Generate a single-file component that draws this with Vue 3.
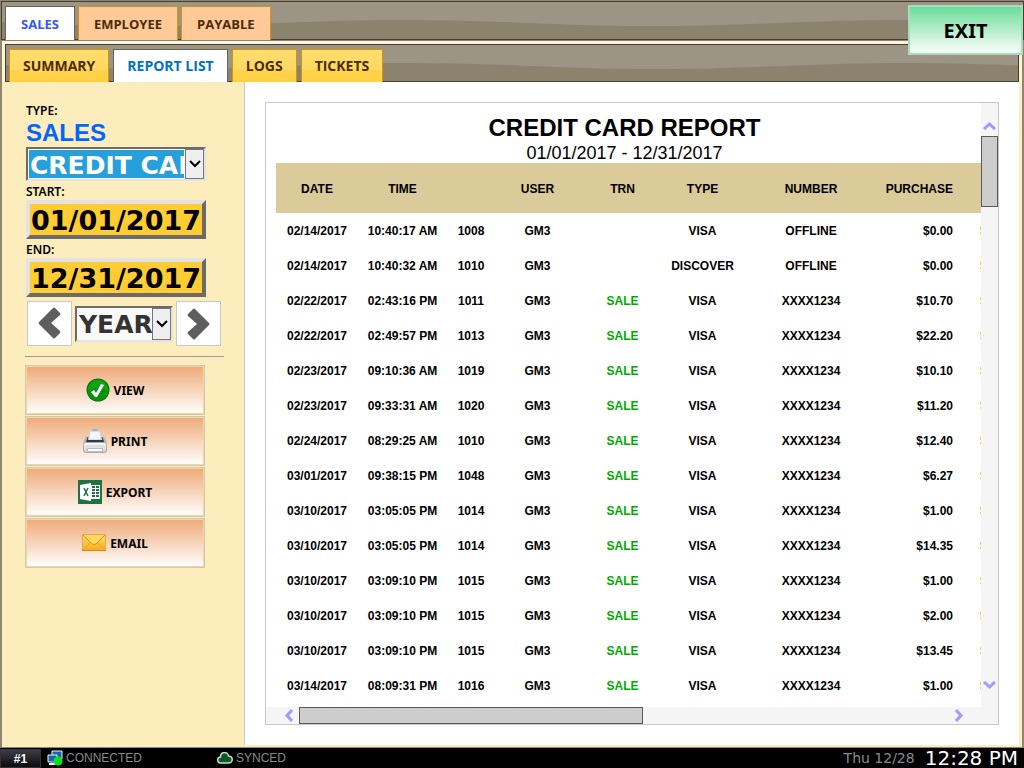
<script setup>
import { ref } from 'vue'

const mainTabs = ['SALES', 'EMPLOYEE', 'PAYABLE']
const subTabs = ['SUMMARY', 'REPORT LIST', 'LOGS', 'TICKETS']
const mainTab = ref('SALES')
const subTab = ref('REPORT LIST')

const report = ref('CREDIT CARD')
const start = ref('01/01/2017')
const end = ref('12/31/2017')
const period = ref('YEAR')

const rows = [
  ['02/14/2017', '10:40:17 AM', '1008', 'GM3', '', 'VISA', 'OFFLINE', '$0.00'],
  ['02/14/2017', '10:40:32 AM', '1010', 'GM3', '', 'DISCOVER', 'OFFLINE', '$0.00'],
  ['02/22/2017', '02:43:16 PM', '1011', 'GM3', 'SALE', 'VISA', 'XXXX1234', '$10.70'],
  ['02/22/2017', '02:49:57 PM', '1013', 'GM3', 'SALE', 'VISA', 'XXXX1234', '$22.20'],
  ['02/23/2017', '09:10:36 AM', '1019', 'GM3', 'SALE', 'VISA', 'XXXX1234', '$10.10'],
  ['02/23/2017', '09:33:31 AM', '1020', 'GM3', 'SALE', 'VISA', 'XXXX1234', '$11.20'],
  ['02/24/2017', '08:29:25 AM', '1010', 'GM3', 'SALE', 'VISA', 'XXXX1234', '$12.40'],
  ['03/01/2017', '09:38:15 PM', '1048', 'GM3', 'SALE', 'VISA', 'XXXX1234', '$6.27'],
  ['03/10/2017', '03:05:05 PM', '1014', 'GM3', 'SALE', 'VISA', 'XXXX1234', '$1.00'],
  ['03/10/2017', '03:05:05 PM', '1014', 'GM3', 'SALE', 'VISA', 'XXXX1234', '$14.35'],
  ['03/10/2017', '03:09:10 PM', '1015', 'GM3', 'SALE', 'VISA', 'XXXX1234', '$1.00'],
  ['03/10/2017', '03:09:10 PM', '1015', 'GM3', 'SALE', 'VISA', 'XXXX1234', '$2.00'],
  ['03/10/2017', '03:09:10 PM', '1015', 'GM3', 'SALE', 'VISA', 'XXXX1234', '$13.45'],
  ['03/14/2017', '08:09:31 PM', '1016', 'GM3', 'SALE', 'VISA', 'XXXX1234', '$1.00']
]
</script>

<template>
  <div class="page">
    <nav class="bar main-bar">
      <button
        v-for="tab in mainTabs"
        :key="tab"
        class="tab"
        :class="{ active: tab === mainTab }"
        @click="mainTab = tab"
      >{{ tab }}</button>
    </nav>
    <button class="exit">EXIT</button>

    <div class="panel">
      <nav class="bar sub-bar">
        <button
          v-for="tab in subTabs"
          :key="tab"
          class="tab"
          :class="{ active: tab === subTab }"
          @click="subTab = tab"
        >{{ tab }}</button>
      </nav>

      <div class="content">
        <aside class="sidebar">
          <label class="caption" for="report">TYPE:</label>
          <div class="group">SALES</div>
          <div class="combo">
            <select id="report" v-model="report" class="selected">
              <option>CREDIT CARD</option>
            </select>
            <span class="drop">
              <svg width="12" height="8" viewBox="0 0 12 8"><path d="M1 1l5 5 5-5" fill="none" stroke="#000" stroke-width="2" /></svg>
            </span>
          </div>
          <label class="caption" for="start">START:</label>
          <input id="start" v-model="start" class="date" type="text" />
          <label class="caption" for="end">END:</label>
          <input id="end" v-model="end" class="date" type="text" />

          <div class="period">
            <button class="step" aria-label="Previous">
              <svg width="23" height="33" viewBox="0 0 23 33"><path d="M17 1l5 5q1 1 0 2l-9 8 9 8q1 1 0 2l-5 5q-1 1-2 0L1 17q-1-1 0-2L15 1q1-1 2 0z" fill="#5e5e5e" /></svg>
            </button>
            <div class="combo small">
              <select v-model="period" aria-label="Period">
                <option>YEAR</option>
              </select>
              <span class="drop">
                <svg width="12" height="8" viewBox="0 0 12 8"><path d="M1 1l5 5 5-5" fill="none" stroke="#000" stroke-width="2" /></svg>
              </span>
            </div>
            <button class="step" aria-label="Next">
              <svg width="23" height="33" viewBox="0 0 23 33"><path d="M6 2L1 7q-1 1 0 2l9 8-9 8q-1 1 0 2l5 5q1 1 2 0l14-14q1-1 0-2L8 2Q7 1 6 2z" fill="#5e5e5e" /></svg>
            </button>
          </div>

          <hr />

          <div class="actions">
            <button>
              <svg width="24" height="24" viewBox="0 0 24 24">
                <circle cx="12" cy="12" r="11.5" fill="#067a06" />
                <circle cx="12" cy="12" r="10.5" fill="#089408" />
                <path d="M2 12a10 10 0 0 1 20 0q-9-3-20 0z" fill="#12a312" />
                <path d="M5 14l3-2 2 3 5-9 3 1-7 12h-2z" fill="#fff" />
              </svg>
              VIEW
            </button>
            <button>
              <svg width="24" height="24" viewBox="0 0 24 24">
                <defs>
                  <linearGradient id="printer" x1="0" y1="0" x2="0" y2="1">
                    <stop offset="0" stop-color="#fbfbfb" />
                    <stop offset="1" stop-color="#c9cbcd" />
                  </linearGradient>
                </defs>
                <path d="M9 1l3-1 3 1v2H9z" fill="#5fb0dc" />
                <path d="M4 8h16l1.500 5h-19z" fill="#4a5258" />
                <path d="M3.500 8L1 14M20.500 8l2.500 6" stroke="#b4b8bb" stroke-width="2" />
                <path d="M6.500 2h11l1 9h-13z" fill="#f2f6fa" stroke="#c3cad0" />
                <path d="M4 11h16v2H4z" fill="#343b40" />
                <rect x=".5" y="13.500" width="23" height="10" rx="2" fill="url(#printer)" stroke="#a9acaf" />
                <path d="M4.500 19.500h15v3h-15z" fill="#fff" stroke="#b9bbbd" />
                <path d="M3 17h18" stroke="#d4d6d8" />
              </svg>
              PRINT
            </button>
            <button>
              <svg width="24" height="24" viewBox="0 0 24 24">
                <path d="M0 0h24v24H0z" fill="#1f7244" />
                <path d="M13 5h9v14h-9z" fill="#fff" />
                <path d="M14 6h3v2h-3zm4 0h3v2h-3zm-4 3h3v2h-3zm4 0h3v2h-3zm-4 3h3v2h-3zm4 0h3v2h-3zm-4 3h3v2h-3zm4 0h3v2h-3z" fill="#1f7244" />
                <path d="M2 5l11-2v18L2 19z" fill="#fff" />
                <path d="M6 8l4 8M10 8l-4 8" stroke="#1f7244" stroke-width="1.5" />
              </svg>
              EXPORT
            </button>
            <button>
              <svg width="24" height="24" viewBox="0 0 24 24">
                <defs>
                  <linearGradient id="mail" x1="0" y1="0" x2="0" y2="1">
                    <stop offset="0" stop-color="#ffe07a" />
                    <stop offset="1" stop-color="#fbab18" />
                  </linearGradient>
                </defs>
                <path d="M.5 3.500h23v16H.5z" fill="url(#mail)" stroke="#e8a93c" />
                <path d="M1 19l8-8M23 19l-8-8" fill="none" stroke="#eda02a" />
                <path d="M1 4l9 9q2 1 4 0l9-9" fill="#ffd95e" stroke="#df8a1c" />
                <path d="M0 19.500h24" stroke="#d8851c" />
              </svg>
              EMAIL
            </button>
          </div>
        </aside>

        <main class="main">
          <div class="frame">
            <div class="sheet">
              <h1>CREDIT CARD REPORT</h1>
              <p>01/01/2017 - 12/31/2017</p>
              <table>
                <colgroup>
                  <col class="c-date" />
                  <col class="c-time" />
                  <col class="c-no" />
                  <col class="c-user" />
                  <col class="c-user" />
                  <col class="c-type" />
                  <col class="c-number" />
                  <col class="c-amount" />
                  <col class="c-tip" />
                </colgroup>
                <thead>
                  <tr>
                    <th>DATE</th>
                    <th>TIME</th>
                    <th></th>
                    <th>USER</th>
                    <th>TRN</th>
                    <th>TYPE</th>
                    <th>NUMBER</th>
                    <th class="amount">PURCHASE</th>
                    <th></th>
                  </tr>
                </thead>
                <tbody>
                  <tr v-for="(row, i) in rows" :key="i">
                    <td
                      v-for="(cell, n) in row"
                      :key="n"
                      :class="{ trn: n === 4, amount: n === 7 }"
                    >{{ cell }}</td>
                    <td class="tip">$</td>
                  </tr>
                </tbody>
              </table>
            </div>

            <div class="scroll vertical">
              <button aria-label="Scroll up">
                <svg width="13" height="9" viewBox="0 0 13 9"><path d="M1 8l5.500-5L12 8" fill="none" stroke="#9c9cff" stroke-width="3" /></svg>
              </button>
              <div class="track"><div class="thumb"></div></div>
              <button aria-label="Scroll down">
                <svg width="13" height="9" viewBox="0 0 13 9"><path d="M1 1l5.500 5L12 1" fill="none" stroke="#9c9cff" stroke-width="3" /></svg>
              </button>
            </div>
            <div class="scroll horizontal">
              <button aria-label="Scroll left">
                <svg width="9" height="13" viewBox="0 0 9 13"><path d="M8 1L3 6.500 8 12" fill="none" stroke="#9c9cff" stroke-width="3" /></svg>
              </button>
              <div class="track"><div class="thumb"></div></div>
              <button aria-label="Scroll right">
                <svg width="9" height="13" viewBox="0 0 9 13"><path d="M1 1l5 5.500L1 12" fill="none" stroke="#9c9cff" stroke-width="3" /></svg>
              </button>
            </div>
          </div>
        </main>
      </div>
    </div>

    <footer class="status">
      <span class="station">#1</span>
      <span class="state connected">
        <svg width="16" height="16" viewBox="0 0 16 16">
          <path d="M5 1h10v8H5z" fill="#1667b0" stroke="#f4f4f4" />
          <path d="M1 5h9v7H1z" fill="#1667b0" stroke="#f4f4f4" />
          <path d="M2 14h7" stroke="#f4f4f4" stroke-width="2" />
          <circle cx="11" cy="11" r="4.500" fill="#0fe01c" />
        </svg>
        CONNECTED
      </span>
      <span class="state">
        <svg width="16" height="12" viewBox="0 0 16 12"><path d="M4 11a3 3 0 0 1-.5-6 4 4 0 0 1 8-1 3.500 3.500 0 0 1 .5 7z" fill="#0c5a22" stroke="#cfd6cf" stroke-width="1.500" /></svg>
        SYNCED
      </span>
      <span class="day">Thu 12/28</span>
      <span class="clock">12:28 PM</span>
    </footer>
  </div>
</template>

<style>
body {
  margin: 0;
}
</style>

<style scoped>
* {
  box-sizing: border-box;
}

.page {
  position: relative;
  display: flex;
  flex-direction: column;
  height: 100vh;
  padding-top: 1px;
  overflow: hidden;
  background: #8f8671;
  font-family: "Liberation Sans", Arial, sans-serif;
  color: #000;
}

button {
  padding: 0;
  margin: 0;
  cursor: pointer;
}

/* wavy two-tone texture, repeats every 500px */
.bar {
  display: flex;
  align-items: flex-end;
  gap: 3px;
  border: 1px solid #453f33;
  background: #9c9484 url("data:image/svg+xml,%3Csvg xmlns='http://www.w3.org/2000/svg' width='500' height='39'%3E%3Cpath d='M-100 18C0 18 50 24 150 24S300 18 400 18S550 24 650 24V39H-100z' fill='%238c836f'/%3E%3C/svg%3E") repeat-x;
}

.main-bar {
  height: 39px;
  margin: 0 0 0 1px;
  padding-left: 3px;
}

.tab {
  height: 33px;
  margin-bottom: -1px;
  padding: 0 13px;
  border: 1px solid #d4940c;
  border-bottom: 0;
  background: #ffca98;
  color: #4a2c08;
  font: bold 14px/32px "Open Sans", "Noto Sans", sans-serif;
}

.main-bar .tab {
  height: 34px;
  padding: 0 15px;
  font-size: 13px;
}

.sub-bar {
  gap: 4px;
}

.sub-bar .tab {
  background: linear-gradient(#ffdd6c, #ffd961 60%, #ffd24a 65%, #ffd041);
}

.main-bar .tab.active {
  border-color: #6b6250;
  background: #fff;
  color: #3355ff;
}

.sub-bar .tab.active {
  border-color: #6b6250;
  background: #fff;
  color: #0072c6;
}

.exit {
  position: absolute;
  top: 5px;
  right: 1px;
  width: 115px;
  height: 50px;
  border: 1px solid #c8c8c8;
  box-shadow: inset 0 0 0 1px #86f0a6;
  background: linear-gradient(#68dc98, #fff);
  font: bold 20px "Noto Sans", sans-serif;
}

.panel {
  flex: 1;
  display: flex;
  flex-direction: column;
  min-height: 0;
  margin: 1px 2px;
  padding-top: 3px;
  background: linear-gradient(#fff5dc, #fdecbc 90px);
}

.sub-bar {
  height: 38px;
  margin: 0 3px;
  padding-left: 3px;
}

.content {
  flex: 1;
  display: flex;
  min-height: 0;
  padding: 0 3px 2px 0;
}

.sidebar {
  width: 243px;
  padding: 21px 20px 0 24px;
  border-right: 1px solid #c8c8c8;
  background: #fdecbc;
}

.caption {
  display: block;
  height: 16px;
  font: 600 12px/16px "Noto Sans", sans-serif;
}

.group {
  height: 28px;
  color: #0066ff;
  font-size: 24px;
  font-weight: bold;
  line-height: 28px;
}

.combo {
  display: flex;
  width: 180px;
  height: 34px;
  margin-bottom: 3px;
  border: 2px solid;
  border-color: #6b6b6b #e3e3e3 #e3e3e3 #6b6b6b;
  background: #fff;
}

.combo select {
  flex: 1;
  min-width: 0;
  margin: 1px;
  padding: 2px 0 0 1px;
  border: 0;
  border-radius: 0;
  appearance: none;
  background: #f9f9f9;
  color: #333;
  font: bold 25px/28px "DejaVu Sans", Verdana, sans-serif;
}

.combo select.selected {
  background: #26a0da;
  color: #fff;
}

.drop {
  display: flex;
  align-items: center;
  justify-content: center;
  width: 19px;
  border: 1px solid #767676;
  background: #efefef;
  pointer-events: none;
}

.date {
  display: block;
  width: 180px;
  height: 39px;
  margin-bottom: 3px;
  padding: 1px 0 0 1px;
  border: 4px solid;
  border-color: #e3e3e3 #6b6b6b #6b6b6b #e3e3e3;
  border-radius: 0;
  background: #ffcc33;
  font: bold 27px "DejaVu Sans", Verdana, sans-serif;
}

.period {
  display: flex;
  align-items: center;
  gap: 3px;
  padding: 1px 0 0 1px;
}

.step {
  display: flex;
  align-items: center;
  justify-content: center;
  width: 45px;
  height: 45px;
  border: 1px solid #c8c8c8;
  background: #fff;
}

.combo.small {
  width: 98px;
  height: 36px;
  margin: 0;
}

.combo.small select {
  margin: 0;
  padding-left: 2px;
}

hr {
  width: 199px;
  height: 1px;
  margin: 10px 0 8px -1px;
  border: 0;
  background: #9a9a9a;
}

.actions {
  display: flex;
  flex-direction: column;
  gap: 1px;
  width: 180px;
  margin-left: -1px;
}

.actions button {
  display: flex;
  align-items: center;
  justify-content: center;
  gap: 4px;
  height: 50px;
  border: 1px solid #c8c8c8;
  box-shadow: inset 0 0 0 1px #fbd58a;
  background: linear-gradient(#eea977, #fff);
  font: bold 12px "Noto Sans", sans-serif;
}

.main {
  flex: 1;
  min-width: 0;
  padding: 20px;
  background: #fff;
}

.frame {
  display: grid;
  grid-template-columns: 1fr 17px;
  grid-template-rows: 1fr 17px;
  height: 100%;
  border: 1px solid #c8c8c8;
  background: #f5f5f5;
}

.sheet {
  min-width: 0;
  min-height: 0;
  padding: 10px 0 0 10px;
  overflow: hidden;
  background: #fff;
}

h1,
p {
  margin: 0 8px 0 0;
  text-align: center;
}

h1 {
  font-size: 24px;
  line-height: 30px;
}

p {
  font-size: 18px;
  line-height: 20px;
}

table {
  width: 1380px;
  table-layout: fixed;
  border-collapse: collapse;
  font-size: 12px;
  font-weight: bold;
}

.c-date {
  width: 82px;
}

.c-time {
  width: 89px;
}

.c-no {
  width: 48px;
}

.c-user {
  width: 85px;
}

.c-type {
  width: 75px;
}

.c-number {
  width: 142px;
}

.c-amount {
  width: 81px;
}

thead {
  background: #dccb9a;
}

th {
  height: 50px;
  padding: 2px 0 0;
}

td {
  height: 35px;
  padding: 0;
  text-align: center;
}

.trn {
  color: #00aa00;
}

.amount {
  padding-right: 10px;
  text-align: right;
}

.tip {
  padding-left: 17px;
  color: #e8a33c;
  text-align: left;
}

.scroll {
  display: flex;
  background: #f5f5f5;
}

.scroll button {
  display: flex;
  align-items: center;
  justify-content: center;
  width: 17px;
  height: 17px;
  border: 0;
  background: none;
}

.vertical {
  flex-direction: column;
  padding: 11px 0;
}

.vertical button {
  height: 22px;
}

.horizontal {
  padding: 0 11px;
}

.horizontal button {
  width: 22px;
}

.track {
  flex: 1;
}

.thumb {
  border: 1px solid #5a5a5a;
  background: #cdcdcd;
}

.vertical .thumb {
  height: 71px;
}

.horizontal .thumb {
  width: 53%;
  height: 17px;
}

.status {
  display: flex;
  align-items: center;
  height: 20px;
  background: #000;
  color: #8a8a8a;
}

.station {
  width: 41px;
  height: 19px;
  border: 1px solid #333338;
  background: linear-gradient(#3c3c44, #0c0c0e);
  color: #fff;
  font-size: 12px;
  font-weight: bold;
  line-height: 18px;
  text-align: center;
}

.state {
  display: flex;
  align-items: center;
  gap: 3px;
  margin-left: 6px;
  font-size: 12px;
}

.connected {
  width: 164px;
}

.day {
  margin-left: auto;
  font: 14px "DejaVu Sans", Verdana, sans-serif;
}

.clock {
  margin: 0 6px 0 10px;
  color: #fff;
  font: 20px/20px "DejaVu Sans", Verdana, sans-serif;
}
</style>
